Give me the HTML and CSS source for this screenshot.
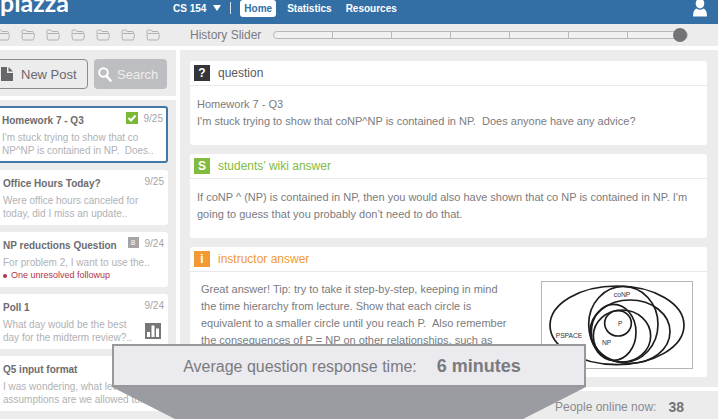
FILE: index.html
```html
<!DOCTYPE html>
<html lang="en">
<head>
<meta charset="utf-8">
<title>Piazza - CS 154</title>
<link rel="stylesheet" href="styles.css">
</head>
<body>
<svg class="sprite" aria-hidden="true">
  <symbol id="folder" viewBox="0 0 14 12"><path d="M1 4V2.2Q1 1 2.2 1H4.800L6 2.500H11.500Q12.500 2.500 12.500 3.500V4M1.800 4.500H12.400Q13.600 4.500 13.400 5.600L12.700 10Q12.500 11 11.400 11H2.700Q1.600 11 1.500 10L.8 5.600Q.7 4.500 1.800 4.500Z" fill="none" stroke="#b0b0b2"/></symbol>
</svg>

<header class="topbar">
  <a class="logo" href="#">piazza</a>
  <nav class="nav">
    <button class="course" type="button">CS 154 <svg width="8" height="6" viewBox="0 0 8 6"><path d="M0 0H8L4 6Z" fill="#fff"/></svg></button>
    <span class="divider"></span>
    <a class="tab active" href="#">Home</a>
    <a class="tab" href="#">Statistics</a>
    <a class="tab" href="#">Resources</a>
  </nav>
  <button class="user" type="button" aria-label="Account"><svg width="14" height="18" viewBox="0 0 14 18"><ellipse cx="7" cy="4.500" rx="4.300" ry="5" fill="#fff"/><path d="M0 17.500Q0 10.500 3.500 9.500Q7 12 10.500 9.500Q14 10.500 14 17.500Z" fill="#fff"/></svg></button>
</header>

<div class="toolbar">
  <div class="folders">
    <svg><use href="#folder"/></svg><svg><use href="#folder"/></svg><svg><use href="#folder"/></svg><svg><use href="#folder"/></svg><svg><use href="#folder"/></svg><svg><use href="#folder"/></svg><svg><use href="#folder"/></svg>
  </div>
  <div class="history">
    <label for="history">History Slider</label>
    <input id="history" type="range" min="0" max="7" value="7">
  </div>
</div>

<div class="workspace">
  <aside class="sidebar">
    <div class="actions">
      <button class="new-post" type="button"><svg width="12" height="14" viewBox="0 0 12 14"><path d="M0 0H6V6H12V14H0Z" fill="#67676a"/><path d="M7.500 0L12 4.600H7.500Z" fill="#67676a"/></svg>New Post</button>
      <button class="search" type="button"><svg width="14" height="15" viewBox="0 0 14 15"><circle cx="5.500" cy="5.500" r="4.300" fill="none" stroke="#fff" stroke-width="2"/><path d="M8.500 9L12.500 13.500" stroke="#fff" stroke-width="2.600" stroke-linecap="round"/></svg>Search</button>
    </div>
    <div class="posts">
      <article class="post selected">
        <div class="head"><h3>Homework 7 - Q3</h3><svg class="mark" width="12" height="12" viewBox="0 0 12 12"><rect width="12" height="12" fill="#7ab735"/><path d="M2.500 6L5 8.500L9.500 3.500" fill="none" stroke="#fff" stroke-width="2"/></svg><time>9/25</time></div>
        <p>I'm stuck trying to show that co<br>NP^NP is contained in NP.&nbsp; Does..</p>
      </article>
      <article class="post">
        <div class="head"><h3>Office Hours Today?</h3><time>9/25</time></div>
        <p>Were office hours canceled for<br>today, did I miss an update..</p>
      </article>
      <article class="post">
        <div class="head"><h3>NP reductions Question</h3><span class="count">8</span><time>9/24</time></div>
        <p>For problem 2, I want to use the..</p>
        <p class="followup">One unresolved followup</p>
      </article>
      <article class="post">
        <div class="head"><h3>Poll 1</h3><time>9/24</time></div>
        <div class="poll">
          <p>What day would be the best<br>day for the midterm review?..</p>
          <svg width="16" height="16" viewBox="0 0 16 16"><rect width="16" height="16" fill="#77777a"/><path d="M2 9H5V14H2ZM6.500 2.500H9.500V14H6.500ZM11 5.500H14V14H11Z" fill="#fff"/></svg>
        </div>
      </article>
      <article class="post">
        <div class="head"><h3>Q5 input format</h3></div>
        <p>I was wondering, what level of<br>assumptions are we allowed to..</p>
      </article>
    </div>
  </aside>

  <div class="content">
    <main class="thread">
      <section class="card">
        <h2><span class="badge dark">?</span>question</h2>
        <div class="body">
          <p>Homework 7 - Q3<br>I'm stuck trying to show that coNP^NP is contained in NP.&nbsp; Does anyone have any advice?</p>
        </div>
      </section>
      <section class="card students">
        <h2><span class="badge">S</span>students’ wiki answer</h2>
        <div class="body">
          <p>If coNP ^ (NP) is contained in NP, then you would also have shown that co NP is contained in NP. I'm<br>going to guess that you probably don’t need to do that.</p>
        </div>
      </section>
      <section class="card instructor">
        <h2><span class="badge">i</span>instructor answer</h2>
        <div class="body with-figure">
          <p>Great answer! Tip: try to take it step-by-step, keeping in mind<br>the time hierarchy from lecture. Show that each circle is<br>equivalent to a smaller circle until you reach P.&nbsp; Also remember<br>the consequences of P = NP on other relationships, such as</p>
          <svg class="figure" viewBox="62 34 450 258" role="img" aria-label="Complexity classes">
            <g fill="none" stroke="#1c1c1c" stroke-width="5">
              <ellipse cx="287" cy="164" rx="201" ry="118"/>
              <ellipse cx="306" cy="161" rx="104" ry="114"/>
              <ellipse cx="326" cy="183" rx="120" ry="95"/>
              <ellipse cx="302" cy="196" rx="86" ry="78"/>
              <ellipse cx="277" cy="185" rx="67" ry="84"/>
              <ellipse cx="290" cy="158" rx="40" ry="38"/>
            </g>
            <g class="labels"><text x="302" y="79">coNP</text><text x="297" y="167">P</text><text x="256" y="223">NP</text><text x="143" y="201">PSPACE</text></g>
          </svg>
        </div>
      </section>
    </main>
    <footer class="online">People online now: <strong>38</strong></footer>
  </div>
</div>

<div class="callout">
  <div class="callout-box">Average question response time: <strong>6 minutes</strong></div>
  <div class="callout-base"></div>
</div>
</body>
</html>
```

FILE: styles.css
```css
* { box-sizing: border-box; }

body {
  display: flex;
  flex-direction: column;
  height: 100vh;
  margin: 0;
  overflow: hidden;
  background: #fff;
  color: #7b7b7e;
  font-family: "Liberation Sans", Arial, sans-serif;
  font-size: 11px;
  line-height: 17px;
}

h2, h3, p { margin: 0; }
button { border: 0; padding: 0; background: none; font: inherit; }
a { text-decoration: none; }
.sprite { position: absolute; width: 0; height: 0; }

.topbar {
  display: flex;
  flex: none;
  align-items: center;
  height: 24px;
  padding-right: 11px;
  padding-bottom: 8px;
  background: #336fa4;
  color: #fff;
}
.logo {
  flex: none;
  width: 173px;
  margin-top: -12px;
  color: #fff;
  font-family: Lato, sans-serif;
  font-size: 25px;
  font-weight: bold;
  line-height: 24px;
}
.nav { display: flex; flex: 1; align-items: center; font-weight: bold; }
.course { display: flex; align-items: center; gap: 7px; color: #fff; font-size: 10px; }
.divider { width: 1px; height: 12px; margin: 0 9px; background: #dce6ef; }
.tab { padding: 0 7px; color: #fff; font-size: 10px; }
.tab.active { margin-right: 4px; padding: 0 4px; border-radius: 3px; background: #fff; color: #336fa4; }
.user svg { display: block; }

.toolbar {
  display: flex;
  flex: none;
  align-items: center;
  height: 22px;
  background: #ececed;
}
.folders { display: flex; flex: none; gap: 11px; width: 194px; margin-left: -4px; }
.folders svg { width: 14px; height: 12px; }
.history { display: flex; flex: 1; align-items: center; gap: 12px; padding-right: 30px; font-size: 12px; }
.history label { flex: none; }
.history input {
  flex: 1;
  min-width: 0;
  height: 14px;
  margin: 0;
  appearance: none;
  background: none;
}
.history input::-webkit-slider-runnable-track {
  height: 8px;
  border: 1px solid #b9b9bb;
  border-radius: 4px;
  background: linear-gradient(to left, #b9b9bb 1px, #f1f1f2 1px) 0 0 / calc(100% / 7) 100%;
}
.history input::-webkit-slider-thumb {
  width: 14px;
  height: 14px;
  margin-top: -4px;
  appearance: none;
  border-radius: 50%;
  background: #737375;
}

.workspace { display: flex; flex: 1; gap: 4px; min-height: 0; padding-top: 4px; }
.sidebar { display: flex; flex: none; flex-direction: column; gap: 4px; width: 176px; }
.actions {
  display: flex;
  gap: 6px;
  padding: 9px 9px 7px 0;
  background: #ececed;
}
.actions button {
  display: flex;
  align-items: center;
  height: 30px;
  border-radius: 4px;
  font-size: 13px;
}
.new-post { flex: 1; gap: 8px; margin-left: -6px; padding-left: 6px; color: #69696c; }
.actions .new-post { border: 1px solid #8b8b8e; }
.search { gap: 5px; width: 73px; color: #eeeeef; }
.actions .search { padding-left: 4px; background: #bdbec1; }

.posts {
  display: flex;
  flex: 1;
  flex-direction: column;
  gap: 7px;
  padding: 6px 8px 0 0;
  background: #ececed;
}
.post {
  margin-left: -6px;
  padding: 7px 4px 5px 9px;
  border-radius: 3px;
  background: #fff;
  color: #b1b1b4;
  font-size: 10px;
  line-height: 13px;
}
.post.selected { padding: 6px 3px 4px 6px; border: 2px solid #4277a8; }
.head { display: flex; gap: 6px; margin-bottom: 3px; line-height: 14px; }
.head h3 { flex: 1; color: #6c6c6f; font-size: 10px; white-space: nowrap; }
.head time { color: #a4a4a7; line-height: 10px; }
.mark, .count { flex: none; margin-top: -2px; }
.count { width: 11px; height: 11px; background: #a5a5a8; color: #fff; font-size: 8px; line-height: 11px; text-align: center; }
.post .followup { display: flex; align-items: center; gap: 4px; color: #b23349; font-size: 9px; }
.followup::before { width: 4px; height: 4px; border-radius: 50%; background: #b23349; content: ""; }
.poll { display: flex; align-items: center; justify-content: space-between; padding-right: 3px; }

.content { display: flex; flex: 1; flex-direction: column; gap: 4px; min-width: 0; }
.thread {
  display: flex;
  flex-direction: column;
  gap: 9px;
  padding: 11px 11px 10px 10px;
  background: #ececed;
}
.card { border-radius: 3px; background: #fff; }
.card h2 {
  display: flex;
  align-items: center;
  gap: 8px;
  padding: 4px;
  border-bottom: 1px solid #e9e9eb;
  color: #59595c;
  font-size: 12px;
  font-weight: normal;
  line-height: 16px;
}
.badge { width: 16px; background: #81bb40; color: #fff; font-weight: bold; text-align: center; }
.badge.dark { background: #353539; }
.card.students h2 { color: #81bb40; }
.card.instructor h2 { color: #f39a35; }
.instructor .badge { background: #f39a35; }
.body { padding: 10px 7px 15px; }
.with-figure { display: flex; justify-content: space-between; padding: 9px 14px 8px 11px; }
.figure { flex: none; width: 152px; height: 88px; border: 1px solid #b5b5b7; }
.labels { fill: #333; font-size: 20px; text-anchor: middle; }

.online {
  display: flex;
  flex: 1;
  align-items: center;
  justify-content: flex-end;
  gap: 12px;
  padding: 4px 34px 0 0;
  background: #ececed;
  color: #8a8a8d;
  font-size: 12px;
}
.online strong { color: #737376; font-size: 14px; }

.callout { position: absolute; right: 132px; bottom: 0; left: 112px; }
.callout-box {
  display: flex;
  align-items: center;
  justify-content: center;
  gap: 20px;
  padding: 10px 0 8px 6px;
  border: 2px solid #98989c;
  background: #eaeaef;
  color: #7b7b7e;
  font-size: 16px;
  line-height: 21px;
}
.callout-box strong { font-size: 18px; }
.callout-base { height: 32px; background: #9b9ca1; clip-path: polygon(0 0, 100% 0, calc(100% - 63px) 100%, 63px 100%); }
```
